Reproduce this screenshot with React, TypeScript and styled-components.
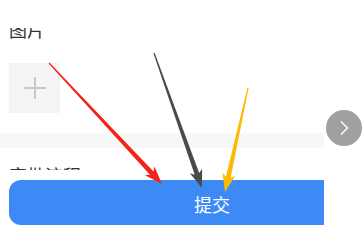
import React from "react";
import styled, { createGlobalStyle } from "styled-components";

const GlobalStyle = createGlobalStyle`
  html, body {
    margin: 0;
    padding: 0;
    background: #ffffff;
  }
  body {
    width: 363px;
    height: 241px;
    overflow: hidden;
    font-family: "Noto Sans CJK SC", "Noto Sans", sans-serif;
  }
`;

const Page = styled.div`
  position: relative;
  width: 363px;
  height: 241px;
  display: flex;
  background: #fff;
`;

const Column = styled.div`
  width: 324px;
  display: flex;
  flex-direction: column;
  overflow: hidden;
`;

const Header = styled.div`
  height: 28px;
  flex-shrink: 0;
  background: #fff;
`;

const ScrollArea = styled.div`
  height: 142px;
  flex-shrink: 0;
  overflow: hidden;
`;

const ScrollInner = styled.div`
  display: flex;
  flex-direction: column;
  margin-top: -8px;
`;

const Label = styled.div<{ $top?: number }>`
  padding-left: 9px;
  margin-top: ${(p) => p.$top ?? 0}px;
  font-size: 18px;
  line-height: 18px;
  color: #333;
  white-space: nowrap;
`;

const UploadBox = styled.div`
  margin: 25px 0 0 9px;
  width: 51px;
  height: 50px;
  background: #f4f4f4;
  display: flex;
  align-items: center;
  justify-content: center;
`;

const Divider = styled.div`
  margin-top: 20px;
  height: 15px;
  background: #f7f7f7;
`;

const Footer = styled.div`
  padding: 10px 0 16px 9px;
`;

const SubmitButton = styled.button`
  width: 406px;
  height: 45px;
  border: none;
  border-radius: 12px;
  background: #3d89f5;
  color: #fff;
  font-family: "Noto Sans CJK SC", "Noto Sans", sans-serif;
  font-size: 18px;
  padding: 0;
  padding-top: 3px;
  display: flex;
  align-items: center;
  justify-content: center;
`;

const Side = styled.div`
  flex: 1;
  display: flex;
  justify-content: center;
  padding-top: 110px;
`;

const NextButton = styled.div`
  width: 36px;
  height: 36px;
  border-radius: 50%;
  background: #a0a0a0;
  display: flex;
  align-items: center;
  justify-content: center;
`;

const Overlay = styled.svg`
  position: absolute;
  left: 0;
  top: 0;
  pointer-events: none;
`;

type Pt = [number, number];

function arrowPoints(tail: Pt, tip: Pt, head = 15, wing = 6.5, shaft = 2.4): string {
  const dx = tip[0] - tail[0];
  const dy = tip[1] - tail[1];
  const len = Math.hypot(dx, dy);
  const ux = dx / len;
  const uy = dy / len;
  const nx = -uy;
  const ny = ux;
  const bx = tip[0] - ux * head;
  const by = tip[1] - uy * head;
  const wx = bx - ux * 3;
  const wy = by - uy * 3;
  const pts: Pt[] = [
    [tail[0] + nx * 0.6, tail[1] + ny * 0.6],
    [bx + nx * shaft, by + ny * shaft],
    [wx + nx * wing, wy + ny * wing],
    tip,
    [wx - nx * wing, wy - ny * wing],
    [bx - nx * shaft, by - ny * shaft],
    [tail[0] - nx * 0.6, tail[1] - ny * 0.6],
  ];
  return pts.map((p) => `${p[0].toFixed(1)},${p[1].toFixed(1)}`).join(" ");
}

const arrows: { tail: Pt; tip: Pt; color: string }[] = [
  { tail: [49, 63], tip: [162, 184], color: "#f5211b" },
  { tail: [154, 53], tip: [202, 188], color: "#4a4a4a" },
  { tail: [248, 88], tip: [225, 192], color: "#ffb900" },
];

export default function App() {
  return (
    <>
      <GlobalStyle />
      <Page>
        <Column>
          <Header />
          <ScrollArea>
            <ScrollInner>
              <Label>图片</Label>
              <UploadBox>
                <svg width="22" height="22" viewBox="0 0 22 22">
                  <path d="M11 0v22M0 11h22" stroke="#c9c9c9" strokeWidth="2" />
                </svg>
              </UploadBox>
              <Divider />
              <Label $top={18}>审批流程</Label>
            </ScrollInner>
          </ScrollArea>
          <Footer>
            <SubmitButton>提交</SubmitButton>
          </Footer>
        </Column>
        <Side>
          <NextButton>
            <svg width="12" height="18" viewBox="0 0 12 18">
              <path d="M3 2.5l6.5 6.5-6.5 6.5" fill="none" stroke="#fff" strokeWidth="1.4" />
            </svg>
          </NextButton>
        </Side>
        <Overlay width="363" height="241" viewBox="0 0 363 241">
          {arrows.map((a, i) => (
            <polygon key={i} points={arrowPoints(a.tail, a.tip)} fill={a.color} />
          ))}
        </Overlay>
      </Page>
    </>
  );
}
